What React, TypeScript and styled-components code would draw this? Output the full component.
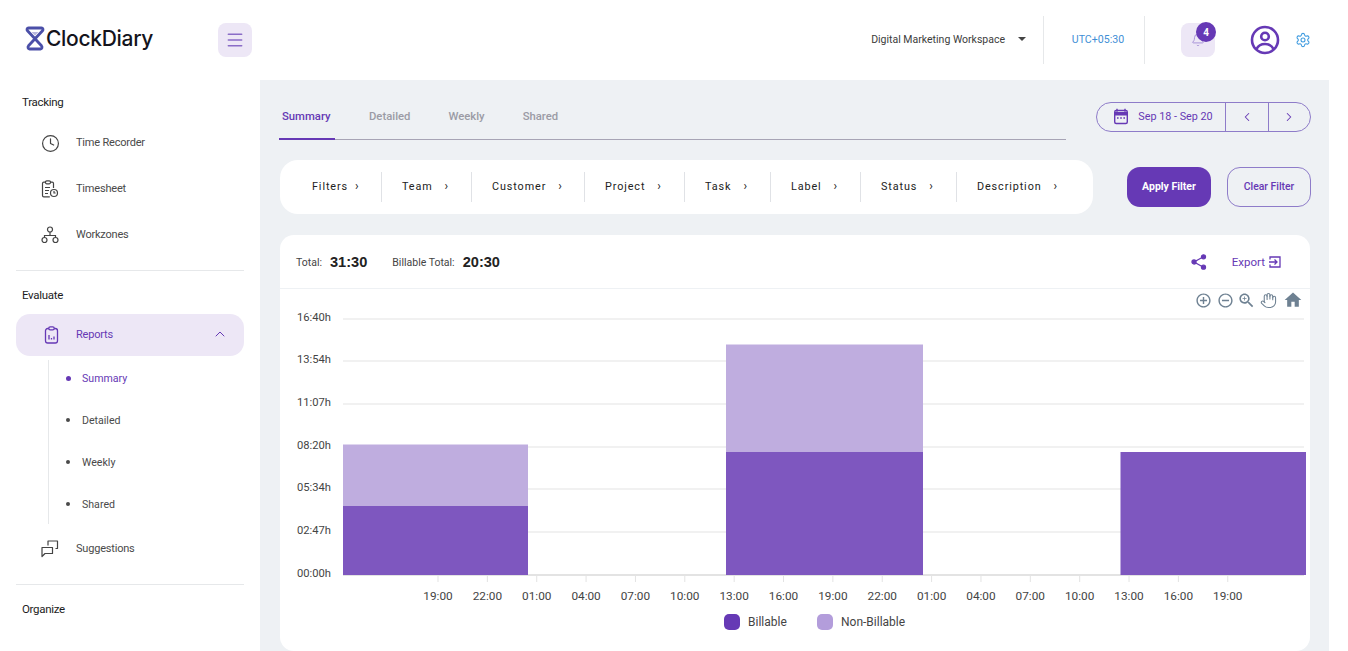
import React from "react"
import styled, { createGlobalStyle } from "styled-components"
import { Bell, ChevronLeft, ChevronRight, ChevronUp, Clock, Hand, Menu, Settings } from "lucide-react"

const GlobalStyle = createGlobalStyle`
  html, body {
    margin: 0;
    padding: 0;
    background: #fff;
    font-family: "Roboto", "Liberation Sans", sans-serif;
    overflow: hidden;
  }
`

const accent = "#6639b5"

const filters = ["Filters", "Team", "Customer", "Project", "Task", "Label", "Status", "Description"]
const filterWidths = [102, 90, 113, 100, 86, 90, 96, 136]
const yTicks = [
  ["16:40h", 319],
  ["13:54h", 361],
  ["11:07h", 404],
  ["08:20h", 447],
  ["05:34h", 489],
  ["02:47h", 532],
  ["00:00h", 575],
] as const
const xTicks = ["19:00", "22:00", "01:00", "04:00", "07:00", "10:00", "13:00", "16:00", "19:00", "22:00", "01:00", "04:00", "07:00", "10:00", "13:00", "16:00", "19:00"]

const Logo = () => (
  <LogoWrap>
    <svg width="20" height="25" viewBox="0 0 20 25" fill="none">
      <path d="M3.500 2h13c1.500 0 2 1.600 1 2.800L3.500 19.800C2.500 21 3 23 4.500 23h11c1.500 0 2-2 1-3.200L2.500 4.800C1.500 3.600 2 2 3.500 2z" stroke="#4b4fa8" strokeWidth="2.800" strokeLinejoin="round" />
      <path d="M6.500 6h7L10 9.500z" fill="#b9b7de" />
    </svg>
    <LogoText>ClockDiary</LogoText>
  </LogoWrap>
)

const TimesheetIcon = () => (
  <svg width="18" height="18" viewBox="0 0 18 18" fill="none" stroke="#444" strokeWidth="1.200">
    <path d="M12.500 8V3.500c0-.8-.6-1.300-1.300-1.300H2.800c-.8 0-1.300.5-1.300 1.300v12c0 .8.500 1.300 1.300 1.300h6" />
    <rect x="4.500" y="0.800" width="5" height="3" rx="1.200" fill="#fff" />
    <path d="M4 7.500h5M4 10.500h4M4 13.500h3" />
    <circle cx="13" cy="13" r="3.500" />
    <path d="M13 11v2h1.600" />
  </svg>
)

const WorkzoneIcon = () => (
  <svg width="18" height="18" viewBox="0 0 18 18" fill="none" stroke="#444" strokeWidth="1.200">
    <circle cx="9" cy="3.500" r="2.500" />
    <circle cx="3.500" cy="14" r="2.500" />
    <circle cx="14.500" cy="14" r="2.500" />
    <path d="M9 6v3M3.500 11.500V9.500h11v2" />
  </svg>
)

const ReportIcon = () => (
  <svg width="16" height="18" viewBox="0 0 16 18" fill="none" stroke={accent} strokeWidth="1.300">
    <rect x="1.500" y="2.500" width="12" height="14.500" rx="2.200" />
    <rect x="4.800" y="0.800" width="5.400" height="3" rx="1.400" fill="#ede7f6" />
    <path d="M5 9v4.500M7.500 12v1.500M10 10.500v3" />
  </svg>
)

const SuggestionIcon = () => (
  <svg width="18" height="18" viewBox="0 0 18 18" fill="none" stroke="#444" strokeWidth="1.200">
    <path d="M7 5.500V1h9.500v7.500h-2M1 7.500h10.500v6H4L1 16.500z" strokeLinejoin="round" />
  </svg>
)

const UserIcon = () => (
  <svg width="30" height="30" viewBox="0 0 30 30" fill="none" stroke={accent} strokeWidth="2.600">
    <circle cx="15" cy="15" r="13" />
    <circle cx="15" cy="11.500" r="3.800" />
    <path d="M6.500 24c2-4 5-5 8.500-5s6.500 1 8.500 5" />
  </svg>
)

const ShareIcon = () => (
  <svg width="16" height="16" viewBox="0 0 16 16" fill={accent} stroke={accent} strokeWidth="1.300">
    <circle cx="12.500" cy="2.800" r="2" />
    <circle cx="3" cy="8" r="2" />
    <circle cx="12.500" cy="13.200" r="2" />
    <path d="M12.500 2.800 3 8l9.500 5.200" fill="none" />
  </svg>
)

const ExportIcon = () => (
  <svg width="12" height="12" viewBox="0 0 12 12" fill="none" stroke={accent} strokeWidth="1.300">
    <path d="M1 3.500V1h10v10H1V8.500M0 6h8M5.500 3.500 8 6 5.500 8.500" />
  </svg>
)

const CalendarIcon = () => (
  <svg width="16" height="17" viewBox="0 0 16 17" fill="none">
    <path d="M4 .8v3M12 .8v3" stroke={accent} strokeWidth="1.400" />
    <rect x="1.700" y="2.500" width="12.600" height="13" rx="1.500" stroke={accent} strokeWidth="1.400" />
    <path d="M1.700 4h12.600v3.500H1.700z" fill={accent} />
    <path d="M4 10h1.600M7.200 10h1.600M10.400 10h1.600" stroke={accent} strokeWidth="1.500" />
  </svg>
)

const ZoomPlusIcon = () => (
  <ToolIcon viewBox="0 0 24 24">
    <path d="M13 7h-2v4H7v2h4v4h2v-4h4v-2h-4V7zm-1-5C6.480 2 2 6.480 2 12s4.480 10 10 10 10-4.480 10-10S17.520 2 12 2zm0 18c-4.410 0-8-3.590-8-8s3.590-8 8-8 8 3.590 8 8-3.590 8-8 8z" />
  </ToolIcon>
)

const ZoomMinusIcon = () => (
  <ToolIcon viewBox="0 0 24 24">
    <path d="M7 11v2h10v-2H7zm5-9C6.480 2 2 6.480 2 12s4.480 10 10 10 10-4.480 10-10S17.520 2 12 2zm0 18c-4.410 0-8-3.590-8-8s3.590-8 8-8 8 3.590 8 8-3.590 8-8 8z" />
  </ToolIcon>
)

const MagnifierIcon = () => (
  <MagnifierToolIcon viewBox="0 0 24 24">
    <path d="M15.500 14h-.79l-.28-.27C15.410 12.590 16 11.110 16 9.500 16 5.910 13.090 3 9.500 3S3 5.910 3 9.500 5.910 16 9.500 16c1.610 0 3.090-.59 4.230-1.570l.27.28v.79l5 4.990L20.490 19l-4.990-5zm-6 0C7.010 14 5 11.990 5 9.500S7.010 5 9.500 5 14 7.010 14 9.500 11.990 14 9.500 14z" />
    <path d="M12 10h-2v2H9v-2H7V9h2V7h1v2h2v1z" />
  </MagnifierToolIcon>
)

const HomeIcon = () => (
  <HomeToolIcon viewBox="0 0 24 24">
    <path d="M10 20v-6h4v6h5v-8h3L12 3 2 12h3v8z" />
  </HomeToolIcon>
)

const Chart = () => (
  <ChartSvg viewBox="280 289 1030 362">
    {yTicks.map(([label, y]) => (
      <g key={label}>
        <line x1={343} x2={1304} y1={y} y2={y} stroke="#e3e3e3" strokeWidth={y === 575 ? 2 : 1} />
        <text x={331} y={y + 2} textAnchor="end" fontSize={11.200} fill="#444">
          {label}
        </text>
      </g>
    ))}
    <rect x={343} y={506} width={185} height={69} fill="#7e57bf" />
    <rect x={343} y={444.500} width={185} height={61.500} fill="#bfaddf" />
    <rect x={726} y={452} width={197} height={123} fill="#7e57bf" />
    <rect x={726} y={344.500} width={197} height={107.500} fill="#bfaddf" />
    <rect x={1120.500} y={452} width={185.500} height={123} fill="#7e57bf" />
    {xTicks.map((t, i) => {
      const x = 438 + i * 49.360
      return (
        <g key={i}>
          <line x1={x} x2={x} y1={576} y2={582} stroke="#e3e3e3" />
          <text x={x} y={600} textAnchor="middle" fontSize={11.800} fill="#444">
            {t}
          </text>
        </g>
      )
    })}
    <rect x={724} y={614} width={16} height={16} rx={5} fill={accent} />
    <text x={748} y={626} fontSize={12} fill="#444">Billable</text>
    <rect x={817} y={614} width={16} height={16} rx={5} fill="#b39ddb" />
    <text x={841} y={626} fontSize={12} fill="#444">Non-Billable</text>
  </ChartSvg>
)

export default function App() {
  return (
    <Page>
      <GlobalStyle />
      <Sidebar>
        <Brand>
          <Logo />
          <MenuButton>
            <Menu size={20} color="#8a6cc7" strokeWidth={1.800} />
          </MenuButton>
        </Brand>
        <Section>
          <SectionTitle>Tracking</SectionTitle>
          <NavItem>
            <NavIcon><Clock size={19} color="#444" strokeWidth={1.500} /></NavIcon>
            Time Recorder
          </NavItem>
          <NavItem>
            <NavIcon><TimesheetIcon /></NavIcon>
            Timesheet
          </NavItem>
          <NavItem>
            <NavIcon><WorkzoneIcon /></NavIcon>
            Workzones
          </NavItem>
        </Section>
        <Section $ruled>
          <SectionTitle $ruled>Evaluate</SectionTitle>
          <ActiveItem>
            <NavIcon><ReportIcon /></NavIcon>
            Reports
            <ChevronUp size={16} color={accent} strokeWidth={1.500} />
          </ActiveItem>
          <SubList>
            <SubItem $active>Summary</SubItem>
            <SubItem>Detailed</SubItem>
            <SubItem>Weekly</SubItem>
            <SubItem>Shared</SubItem>
          </SubList>
          <SuggestionItem>
            <NavIcon><SuggestionIcon /></NavIcon>
            Suggestions
          </SuggestionItem>
        </Section>
        <Section $ruled>
          <SectionTitle $ruled>Organize</SectionTitle>
        </Section>
      </Sidebar>
      <Column>
        <TopBar>
          <Workspace>
            <span>Digital Marketing Workspace</span>
            <Caret />
          </Workspace>
          <Zone>UTC+05:30</Zone>
          <BellBox>
            <Bell size={14} color="#a58fd6" strokeWidth={1.600} />
            <Badge>4</Badge>
          </BellBox>
          <UserSlot><UserIcon /></UserSlot>
          <Settings size={16} color="#3f9be0" strokeWidth={1.600} />
        </TopBar>
        <Main>
          <TabRow>
            <Tabs>
              <Tab $active>Summary</Tab>
              <Tab>Detailed</Tab>
              <Tab>Weekly</Tab>
              <Tab>Shared</Tab>
            </Tabs>
            <DatePicker>
              <DateRange>
                <CalendarIcon />
                Sep 18 - Sep 20
              </DateRange>
              <DateNav><ChevronLeft size={14} strokeWidth={1.800} /></DateNav>
              <DateNav><ChevronRight size={14} strokeWidth={1.800} /></DateNav>
            </DatePicker>
          </TabRow>
          <FilterRow>
            <FilterBar>
              {filters.map((f, i) => (
                <FilterItem key={f} style={{ width: filterWidths[i] }}>
                  {f}
                  <small>›</small>
                </FilterItem>
              ))}
            </FilterBar>
            <ApplyButton>Apply Filter</ApplyButton>
            <ClearButton>Clear Filter</ClearButton>
          </FilterRow>
          <Card>
            <CardHeader>
              <TotalLabel>Total:</TotalLabel>
              <TotalValue>31:30</TotalValue>
              <TotalLabel>Billable Total:</TotalLabel>
              <TotalValue>20:30</TotalValue>
              <HeaderActions>
                <ShareIcon />
                <ExportLink>
                  Export
                  <ExportIcon />
                </ExportLink>
              </HeaderActions>
            </CardHeader>
            <ChartArea>
              <ChartTools>
                <ZoomPlusIcon />
                <ZoomMinusIcon />
                <MagnifierIcon />
                <Hand size={17} strokeWidth={1.500} />
                <HomeIcon />
              </ChartTools>
              <Chart />
            </ChartArea>
          </Card>
        </Main>
      </Column>
    </Page>
  )
}

const Page = styled.div`
  display: flex;
  width: 1348px;
  height: 651px;
  overflow: hidden;
  background: #fff;
`

const Sidebar = styled.aside`
  width: 260px;
  flex-shrink: 0;
  box-sizing: border-box;
  padding: 0 16px;
`

const Brand = styled.div`
  height: 80px;
  display: flex;
  align-items: center;
  justify-content: space-between;
  padding: 0 0 0 9px;
  margin-right: -8px;
  box-sizing: border-box;
`

const LogoWrap = styled.div`
  display: flex;
  align-items: center;
  gap: 1px;
  margin-bottom: 4px;
`

const LogoText = styled.span`
  font-family: "Inter", sans-serif;
  font-size: 21px;
  font-weight: 500;
  letter-spacing: -0.3px;
  color: #14141c;
`

const MenuButton = styled.div`
  width: 34px;
  height: 34px;
  border-radius: 8px;
  background: #ede7f6;
  display: flex;
  align-items: center;
  justify-content: center;
`

const Section = styled.section<{ $ruled?: boolean }>`
  width: 228px;
  border-top: ${p => (p.$ruled ? "1px solid #e6e8ea" : "none")};
  padding-top: ${p => (p.$ruled ? "16px" : "14px")};
  padding-bottom: 12px;
`

const SectionTitle = styled.div<{ $ruled?: boolean }>`
  font-size: 11.500px;
  letter-spacing: -0.3px;
  line-height: 16px;
  color: #1c1c1c;
  padding-left: 6px;
  margin-bottom: ${p => (p.$ruled ? "11px" : "10px")};
`

const NavItem = styled.div`
  height: 46px;
  box-sizing: border-box;
  padding-bottom: 2px;
  display: flex;
  align-items: center;
  font-size: 11px;
  letter-spacing: -0.2px;
  color: #4a4a4a;
`

const NavIcon = styled.span`
  width: 60px;
  padding: 2px 0 0 25px;
  box-sizing: border-box;
  display: flex;
  align-items: center;
  flex-shrink: 0;
`

const ActiveItem = styled(NavItem)`
  height: 42px;
  border-radius: 14px;
  background: #ede7f6;
  color: ${accent};
  svg:last-child {
    margin-left: auto;
    margin-right: 16px;
  }
`

const SuggestionItem = styled(NavItem)`
  margin-top: 2px;
`

const SubList = styled.div`
  display: flex;
  flex-direction: column;
  margin-left: 32px;
  border-left: 1px solid #e6e8ea;
  margin-top: 4px;
  height: 164px;
`

const SubItem = styled.div<{ $active?: boolean }>`
  height: 42px;
  flex-shrink: 0;
  display: flex;
  align-items: center;
  gap: ${p => (p.$active ? "11px" : "12px")};
  padding-left: 17px;
  font-size: 10.600px;
  color: ${p => (p.$active ? accent : "#4a4a4a")};
  &:first-child {
    margin-top: -3px;
  }
  &::before {
    content: "";
    width: ${p => (p.$active ? "5px" : "4px")};
    height: ${p => (p.$active ? "5px" : "4px")};
    border-radius: 50%;
    background: ${p => (p.$active ? accent : "#4a4a4a")};
  }
`

const Column = styled.div`
  width: 1069px;
  flex-shrink: 0;
`

const TopBar = styled.header`
  height: 80px;
  box-sizing: border-box;
  display: flex;
  align-items: center;
  justify-content: flex-end;
  padding: 0 18px 0 0;
`

const Workspace = styled.div`
  display: flex;
  align-items: center;
  gap: 13px;
  font-size: 10.500px;
  color: #3c3c3c;
  height: 48px;
  padding-right: 17px;
  border-right: 1px solid #e6e8ea;
  span {
    margin-bottom: 2px;
  }
`

const Caret = styled.span`
  width: 0;
  height: 0;
  border-left: 4px solid transparent;
  border-right: 4px solid transparent;
  border-top: 4px solid #444;
`

const Zone = styled.div`
  height: 48px;
  width: 101px;
  box-sizing: border-box;
  padding: 0 0 2px 8px;
  border-right: 1px solid #e6e8ea;
  display: flex;
  align-items: center;
  justify-content: center;
  font-size: 10.600px;
  color: #3f8fd6;
`

const BellBox = styled.div`
  position: relative;
  margin-left: 36px;
  width: 34px;
  height: 34px;
  border-radius: 8px;
  background: #ede7f6;
  display: flex;
  align-items: center;
  justify-content: center;
`

const Badge = styled.span`
  position: absolute;
  top: -1px;
  right: -1px;
  width: 20px;
  height: 20px;
  border-radius: 50%;
  background: ${accent};
  color: #fff;
  font-size: 10px;
  font-weight: 700;
  display: flex;
  align-items: center;
  justify-content: center;
`

const UserSlot = styled.div`
  margin: 0 15px 0 35px;
  height: 30px;
`

const Main = styled.main`
  height: 571px;
  background: #eef1f4;
  padding: 0 18px 0 19px;
  box-sizing: border-box;
`

const TabRow = styled.div`
  display: flex;
  justify-content: space-between;
  align-items: flex-start;
  height: 80px;
  padding-top: 22px;
  box-sizing: border-box;
`

const Tabs = styled.div`
  width: 787px;
  height: 37px;
  border-bottom: 1px solid #a7a4b5;
  display: flex;
`

const Tab = styled.div<{ $active?: boolean }>`
  width: ${p => (p.$active ? "56px" : "auto")};
  margin-right: ${p => (p.$active ? "34px" : "38px")};
  height: 38px;
  box-sizing: border-box;
  padding: 8px 0 0 ${p => (p.$active ? "3px" : "0")};
  font-size: 11.300px;
  font-weight: 500;
  color: ${p => (p.$active ? accent : "#9b9ba5")};
  border-bottom: ${p => (p.$active ? `2px solid ${accent}` : "none")};
`

const DatePicker = styled.div`
  width: 215px;
  height: 30px;
  border: 1px solid #8e7cc9;
  border-radius: 15px;
  box-sizing: border-box;
  display: flex;
`

const DateRange = styled.div`
  flex: 1;
  display: flex;
  align-items: center;
  justify-content: center;
  gap: 9px;
  font-size: 10.800px;
  padding: 0 0 1px 4px;
  box-sizing: border-box;
  color: ${accent};
`

const DateNav = styled.div`
  width: 41.500px;
  border-left: 1px solid #8e7cc9;
  display: flex;
  align-items: center;
  justify-content: center;
  color: ${accent};
`

const FilterRow = styled.div`
  display: flex;
  align-items: center;
  height: 54px;
`

const FilterBar = styled.div`
  width: 813px;
  height: 54px;
  border-radius: 18px;
  background: #fff;
  display: flex;
  align-items: center;
  box-sizing: border-box;
  margin-left: 1px;
`

const FilterItem = styled.div`
  height: 30px;
  padding: 0 0 2px 20px;
  display: flex;
  align-items: center;
  gap: 12px;
  font-size: 10.800px;
  letter-spacing: 0.9px;
  color: #222;
  box-sizing: border-box;
  border-right: 1px solid #e0e2e6;
  &:first-child {
    padding-left: 32px;
    gap: 7px;
  }
  &:last-child {
    border-right: none;
  }
  small {
    font-size: 12px;
    letter-spacing: 0;
  }
`

const ApplyButton = styled.button`
  margin-left: 34px;
  width: 84px;
  height: 40px;
  border: none;
  border-radius: 13px;
  background: ${accent};
  color: #fff;
  font: 700 10.500px "Roboto", sans-serif;
  padding: 0 0 2px;
`

const ClearButton = styled.button`
  margin-left: 16px;
  width: 84px;
  height: 40px;
  border: 1px solid #8e7cc9;
  border-radius: 13px;
  background: transparent;
  color: ${accent};
  font: 500 10.400px "Roboto", sans-serif;
  padding: 0 0 2px;
`

const Card = styled.div`
  margin: 21px 0 0 1px;
  width: 1030px;
  height: 416px;
  background: #fff;
  border-radius: 14px;
  overflow: hidden;
`

const CardHeader = styled.div`
  height: 54px;
  box-sizing: border-box;
  padding: 0 29px 0 16px;
  border-bottom: 1px solid #eef1f4;
  display: flex;
  align-items: center;
`

const TotalLabel = styled.span`
  font-size: 10.500px;
  color: #444;
  margin-top: 2px;
`

const TotalValue = styled.span`
  font-family: "Liberation Sans", sans-serif;
  font-size: 14.600px;
  font-weight: 700;
  color: #222;
  margin: 0 25px 0 8px;
`

const HeaderActions = styled.div`
  margin-left: auto;
  display: flex;
  align-items: center;
  gap: 25px;
`

const ExportLink = styled.div`
  display: flex;
  align-items: center;
  gap: 4px;
  font-size: 11.500px;
  color: ${accent};
`

const ChartArea = styled.div`
  position: relative;
`

const ChartTools = styled.div`
  position: absolute;
  top: 1px;
  right: 7px;
  display: flex;
  align-items: center;
  gap: 4.500px;
  color: #6e8192;
`

const ToolIcon = styled.svg`
  width: 17px;
  height: 17px;
  fill: #6e8192;
`

const MagnifierToolIcon = styled(ToolIcon)`
  width: 19px;
  height: 19px;
  margin: 0 -1px;
`

const HomeToolIcon = styled(ToolIcon)`
  width: 20px;
  height: 20px;
  margin-left: 2px;
`

const ChartSvg = styled.svg`
  display: block;
  width: 1030px;
  height: 362px;
  font-family: "Roboto", sans-serif;
`
